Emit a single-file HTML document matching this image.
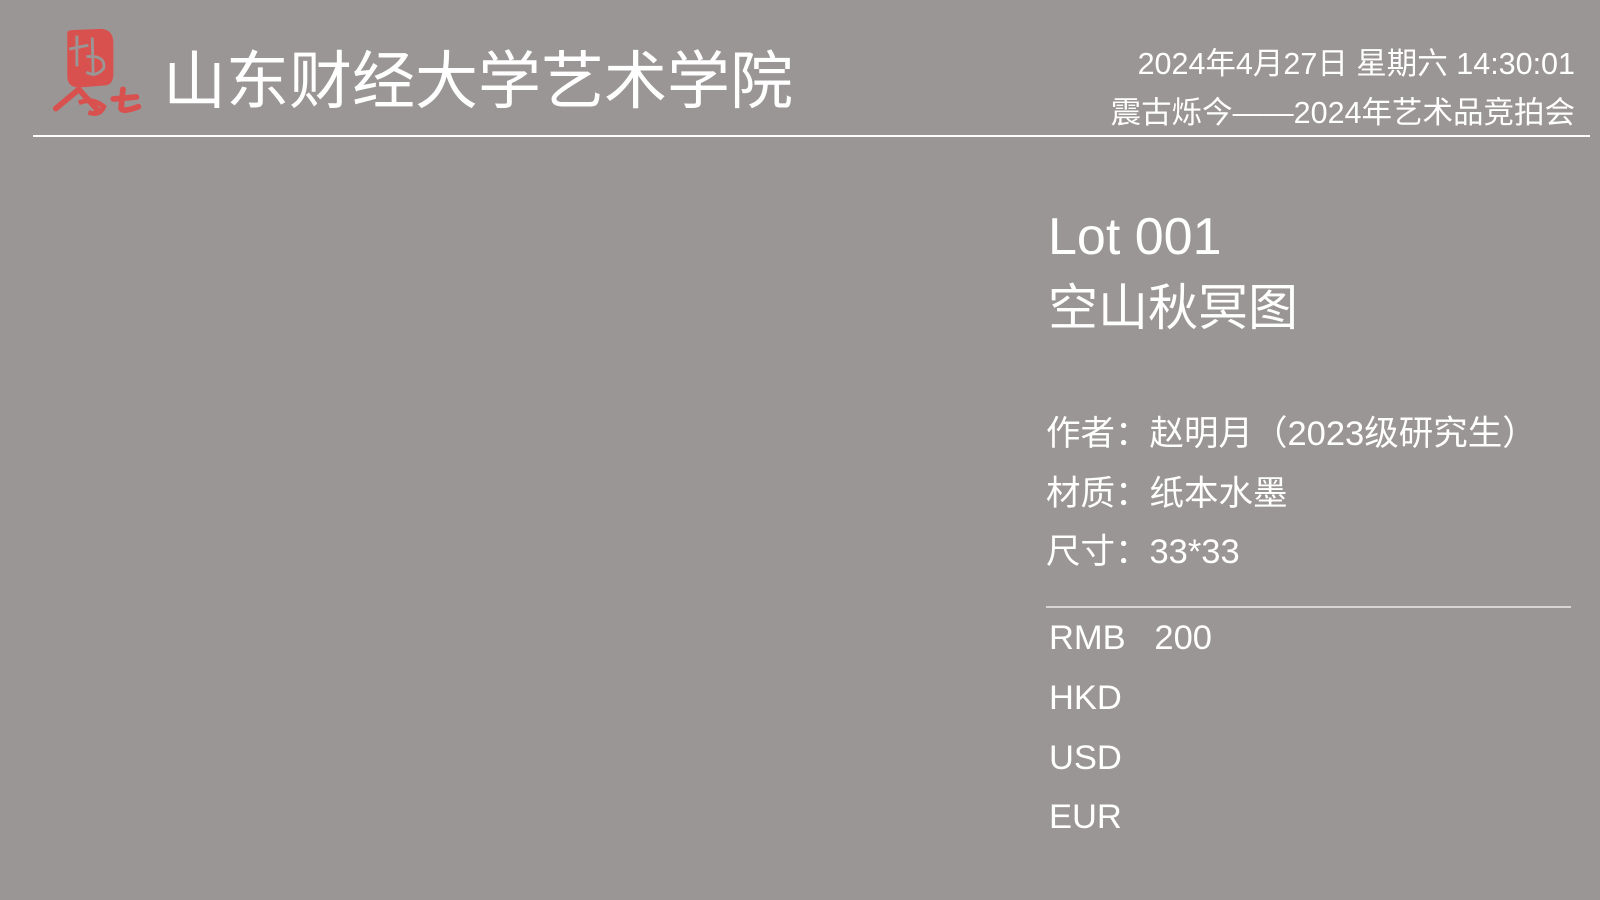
<!DOCTYPE html>
<html><head><meta charset="utf-8"><style>
body{margin:0;width:1600px;height:900px;background:#9a9695;color:#fff;font-family:"Liberation Sans","Noto Sans CJK SC",sans-serif;position:relative;overflow:hidden}
.a{position:absolute;white-space:nowrap;line-height:1}
</style></head><body>
<svg class="a" style="left:50px;top:26px" width="96" height="96" viewBox="0 0 100 100">
<g fill="#d9514f" stroke="#d9514f">
<path d="M18 8 Q16 4 28 4 L52 3 Q66 3 66 18 L66 50 Q66 62 56 62 L30 64 Q18 64 18 52 Z" stroke="none"/>
<path d="M6 86 L30 66 L50 88" fill="none" stroke-width="6" stroke-linecap="round"/>
<path d="M30 80 Q44 74 56 84 Q52 94 40 90" fill="none" stroke-width="5"/>
<path d="M76 66 L74 86 Q76 90 92 84 M66 76 L90 74" fill="none" stroke-width="6" stroke-linecap="round"/>
</g>
<g stroke="#9a9695" stroke-width="3" fill="none"><path d="M28 10 L28 42 M20 24 L40 20 M44 12 L45 52 M38 32 Q58 30 56 44 Q48 54 38 48"/></g>
</svg>
<div class="a" style="left:163px;top:51px;font-size:63px">山东财经大学艺术学院</div>
<div class="a" style="right:25px;top:49px;font-size:30.5px">2024年4月27日 星期六 14:30:01</div>
<div class="a" style="right:25px;top:98px;font-size:30.5px">震古烁今——2024年艺术品竞拍会</div>
<div class="a" style="left:33px;top:135px;width:1557px;height:2px;background:#fff"></div>
<div class="a" style="left:1048px;top:211px;font-size:52px">Lot 001</div>
<div class="a" style="left:1048px;top:283px;font-size:50px">空山秋冥图</div>
<div class="a" style="left:1046px;top:417px;font-size:34.5px">作者：赵明月（2023级研究生）</div>
<div class="a" style="left:1046px;top:477px;font-size:34.5px">材质：纸本水墨</div>
<div class="a" style="left:1046px;top:535px;font-size:34.5px">尺寸：33*33</div>
<div class="a" style="left:1046px;top:606px;width:525px;height:2px;background:#d8d6d5"></div>
<div class="a" style="left:1049px;top:621px;font-size:34.5px">RMB&nbsp;&nbsp;&nbsp;200</div>
<div class="a" style="left:1049px;top:681px;font-size:34.5px">HKD</div>
<div class="a" style="left:1049px;top:741px;font-size:34.5px">USD</div>
<div class="a" style="left:1049px;top:800px;font-size:34.5px">EUR</div>
</body></html>
